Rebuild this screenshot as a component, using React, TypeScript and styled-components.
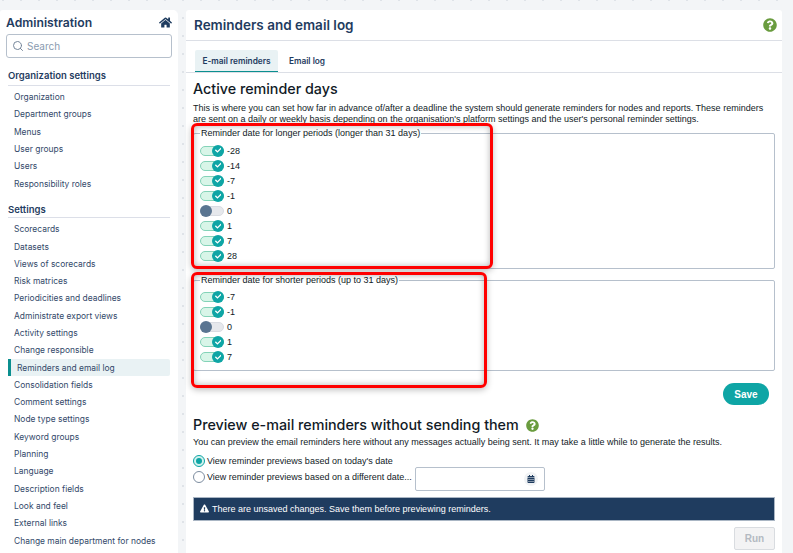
import React from "react";
import styled, { createGlobalStyle } from "styled-components";
import { FaCalendarAlt, FaCheck, FaExclamationTriangle, FaHome, FaQuestionCircle } from "react-icons/fa";
import { Search } from "lucide-react";

const GlobalStyle = createGlobalStyle`
  html, body {
    margin: 0;
    padding: 0;
    height: 553px;
    overflow: hidden;
    background-color: #f3f5f7;
    background-image: radial-gradient(circle at 1px 1px, #dfe3e8 1px, transparent 1.2px);
    background-size: 18px 18px;
    background-position: 2px -1px;
    font-family: "Liberation Sans", Arial, sans-serif;
  }
  * { box-sizing: border-box; }
`;

const Page = styled.div`
  display: flex;
  gap: 8px;
  height: 553px;
  padding: 10px 11px 0 0;
  overflow: hidden;
`;

const Sidebar = styled.aside`
  width: 178px;
  flex-shrink: 0;
  background: #fff;
  border-radius: 3px 5px 0 0;
  padding: 0 8px;
`;

const SideHead = styled.div`
  display: flex;
  align-items: center;
  justify-content: space-between;
  height: 24px;
  margin: 0 -2px;
  color: #1f3c5f;
  svg { font-size: 13px; color: #1f3c5f; }
`;

const SideTitle = styled.h1`
  margin: 0;
  font: 600 12.2px Inter, sans-serif;
  color: #1f3c5f;
`;

const SearchBox = styled.div`
  display: flex;
  align-items: center;
  gap: 3px;
  height: 24px;
  margin: 0 -2px;
  padding: 0 5px;
  border: 1px solid #b6c0cc;
  border-radius: 3px;
  color: #8a9bb0;
  font: 400 10px Inter, sans-serif;
  svg { width: 12px; height: 12px; color: #75869a; }
`;

const GroupTitle = styled.h2<{ $top: number; $height: number }>`
  margin: ${(p) => p.$top}px 0 0;
  height: ${(p) => p.$height}px;
  border-bottom: 1px solid #dcdfe8;
  font: 600 9.5px/13px Inter, sans-serif;
  color: #1f3c5f;
`;

const NavList = styled.ul`
  list-style: none;
  margin: 0;
  padding: 2.4px 0 0;
`;

const NavItem = styled.li<{ $active?: boolean }>`
  display: flex;
  align-items: center;
  height: 17.3px;
  padding-left: 6px;
  font: 400 8.45px Inter, sans-serif;
  white-space: nowrap;
  color: #33496a;
  border-radius: 0 2px 2px 0;
  ${(p) =>
    p.$active &&
    `
    background: #e9f2f4;
    border-left: 3px solid #0b8f8f;
  `}
`;

const Main = styled.main`
  position: relative;
  flex: 1;
  background: #fff;
  border-radius: 3px 3px 0 0;
`;

const TopBar = styled.header`
  display: flex;
  align-items: center;
  justify-content: space-between;
  height: 31px;
  padding: 0 5px 0 8px;
  border-bottom: 1px solid #dcdfe6;
`;

const PageTitle = styled.h1`
  margin: 0;
  font: 600 13.5px Inter, sans-serif;
  color: #1f3c5f;
`;

const Help = styled(FaQuestionCircle)<{ $size: number }>`
  font-size: ${(p) => p.$size}px;
  color: #6a9c3f;
`;

const TabStrip = styled.nav`
  display: flex;
  align-items: flex-end;
  height: 32px;
  padding-left: 9px;
  border-bottom: 1px solid #dcdfe6;
`;

const Tab = styled.div<{ $active?: boolean }>`
  display: flex;
  align-items: center;
  justify-content: center;
  height: 22px;
  width: ${(p) => (p.$active ? "83px" : "58px")};
  font: 600 8.3px Inter, sans-serif;
  color: #1f3c5f;
  border-radius: 2px 2px 0 0;
  background: ${(p) => (p.$active ? "#e9f2f4" : "transparent")};
  border-bottom: 1px solid ${(p) => (p.$active ? "#0b8f8f" : "transparent")};
`;

const Content = styled.div`
  padding: 7px 7px 0;
`;

const Heading = styled.h2`
  margin: 0;
  font: 500 14.3px/18px Inter, sans-serif;
  color: #111a26;
`;

const Paragraph = styled.p<{ $top: number }>`
  margin: ${(p) => p.$top}px 0 0;
  font-size: 9px;
  line-height: 10.5px;
  color: #111a26;
`;

const Fieldset = styled.fieldset<{ $height: number; $top: number; $pad: number }>`
  margin: ${(p) => p.$top}px 0 0;
  padding: ${(p) => p.$pad}px 6px 0;
  height: ${(p) => p.$height}px;
  border: 1px solid #b6c0cc;
  border-radius: 2px;
  min-width: 0;
`;

const Legend = styled.legend`
  padding: 0 1px;
  font-size: 9px;
  line-height: 11px;
  color: #111a26;
`;

const ToggleRow = styled.div`
  display: flex;
  align-items: center;
  gap: 3px;
  height: 15.1px;
  font-size: 9px;
  color: #111a26;
`;

const Track = styled.span<{ $on: boolean }>`
  position: relative;
  display: inline-block;
  width: 24px;
  height: 10px;
  border-radius: 5px;
  background: ${(p) => (p.$on ? "#d8f5e8" : "#e6e8ec")};
  border: 1px solid ${(p) => (p.$on ? "#84d3b8" : "#d9dce2")};
`;

const Knob = styled.span<{ $on: boolean }>`
  position: absolute;
  top: -2px;
  ${(p) => (p.$on ? "right: -1px;" : "left: -1px;")}
  display: flex;
  align-items: center;
  justify-content: center;
  width: 12px;
  height: 12px;
  border-radius: 50%;
  background: ${(p) => (p.$on ? "#0ea5a5" : "#5a7591")};
  color: #fff;
  svg { font-size: 6.5px; }
`;

const Annotation = styled.div<{ $left: number; $top: number; $width: number; $height: number }>`
  position: absolute;
  left: ${(p) => p.$left}px;
  top: ${(p) => p.$top}px;
  width: ${(p) => p.$width}px;
  height: ${(p) => p.$height}px;
  border: 3px solid #f00;
  border-radius: 6px;
  pointer-events: none;
  box-shadow: 0 2px 6px rgba(0, 0, 0, 0.25), inset 0 0 6px rgba(0, 0, 0, 0.3);
`;

const SaveRow = styled.div`
  display: flex;
  justify-content: flex-end;
  padding: 12px 6px 0 0;
`;

const SaveButton = styled.button`
  width: 46px;
  height: 22px;
  border: 0;
  border-radius: 11px;
  background: #0ea5a5;
  color: #fff;
  font: 700 10px "Liberation Sans", sans-serif;
`;

const HeadingRow = styled.div`
  display: flex;
  align-items: center;
  gap: 7px;
  margin-top: 11px;
`;

const RadioRow = styled.label<{ $top: number }>`
  display: flex;
  align-items: center;
  gap: 2px;
  height: ${(p) => (p.$top ? "12px" : "20px")};
  margin-top: ${(p) => p.$top}px;
  font-size: 9px;
  color: #111a26;
`;

const Radio = styled.span<{ $on?: boolean }>`
  display: flex;
  align-items: center;
  justify-content: center;
  width: 12px;
  height: 12px;
  border-radius: 50%;
  border: 1px solid ${(p) => (p.$on ? "#0ea5a5" : "#7d8da0")};
  background: ${(p) => (p.$on ? "#d3f2ee" : "#fff")};
  &::after {
    content: "";
    width: 6px;
    height: 6px;
    border-radius: 50%;
    background: ${(p) => (p.$on ? "#0ea5a5" : "transparent")};
  }
`;

const DateInput = styled.div`
  display: flex;
  align-items: center;
  justify-content: flex-end;
  width: 130px;
  height: 24px;
  margin: 0 0 -4px 1px;
  padding-right: 6px;
  border: 1px solid #b6c0cc;
  border-radius: 2px;
`;

const CalendarDot = styled.span`
  display: flex;
  align-items: center;
  justify-content: center;
  width: 14px;
  height: 14px;
  border-radius: 50%;
  background: #f1f3f5;
  color: #1f3c5f;
  svg { font-size: 8px; }
`;

const Alert = styled.div`
  display: flex;
  align-items: center;
  gap: 3px;
  height: 24px;
  margin-top: 10px;
  padding-left: 6px;
  background: #1f3c5f;
  border: 1px solid #aab6c4;
  color: #fff;
  font-size: 9px;
  svg { font-size: 9px; }
`;

const RunRow = styled.div`
  display: flex;
  justify-content: flex-end;
  padding-top: 6px;
`;

const RunButton = styled.button`
  width: 41px;
  height: 23px;
  border: 1px solid #d9dce0;
  border-radius: 2px;
  background: #f3f3f4;
  color: #b4bac2;
  font: 700 10px "Liberation Sans", sans-serif;
`;

const orgItems = ["Organization", "Department groups", "Menus", "User groups", "Users", "Responsibility roles"];
const settingItems = [
  "Scorecards",
  "Datasets",
  "Views of scorecards",
  "Risk matrices",
  "Periodicities and deadlines",
  "Administrate export views",
  "Activity settings",
  "Change responsible",
  "Reminders and email log",
  "Consolidation fields",
  "Comment settings",
  "Node type settings",
  "Keyword groups",
  "Planning",
  "Language",
  "Description fields",
  "Look and feel",
  "External links",
  "Change main department for nodes",
];

const longDays = [-28, -14, -7, -1, 0, 1, 7, 28];
const shortDays = [-7, -1, 0, 1, 7];

function Toggle({ day }: { day: number }) {
  const on = day !== 0;
  return (
    <ToggleRow>
      <Track $on={on}>
        <Knob $on={on}>{on && <FaCheck />}</Knob>
      </Track>
      {day}
    </ToggleRow>
  );
}

export default function App() {
  return (
    <Page>
      <GlobalStyle />
      <Sidebar>
        <SideHead>
          <SideTitle>Administration</SideTitle>
          <FaHome />
        </SideHead>
        <SearchBox>
          <Search />
          Search
        </SearchBox>
        <GroupTitle $top={11} $height={17}>Organization settings</GroupTitle>
        <NavList>
          {orgItems.map((item) => (
            <NavItem key={item}>{item}</NavItem>
          ))}
        </NavList>
        <GroupTitle $top={11} $height={15}>Settings</GroupTitle>
        <NavList>
          {settingItems.map((item) => (
            <NavItem key={item} $active={item === "Reminders and email log"}>
              {item}
            </NavItem>
          ))}
        </NavList>
      </Sidebar>
      <Main>
        <TopBar>
          <PageTitle>Reminders and email log</PageTitle>
          <Help $size={14} />
        </TopBar>
        <TabStrip>
          <Tab $active>E-mail reminders</Tab>
          <Tab>Email log</Tab>
        </TabStrip>
        <Content>
          <Heading>Active reminder days</Heading>
          <Paragraph $top={5}>
            This is where you can set how far in advance of/after a deadline the system should generate reminders for nodes and reports. These reminders
            are sent on a daily or weekly basis depending on the organisation's platform settings and the user's personal reminder settings.
          </Paragraph>
          <Fieldset $top={4} $height={141} $pad={4}>
            <Legend>Reminder date for longer periods (longer than 31 days)</Legend>
            {longDays.map((day) => (
              <Toggle key={day} day={day} />
            ))}
          </Fieldset>
          <Fieldset $top={6} $height={96} $pad={3}>
            <Legend>Reminder date for shorter periods (up to 31 days)</Legend>
            {shortDays.map((day) => (
              <Toggle key={day} day={day} />
            ))}
          </Fieldset>
          <SaveRow>
            <SaveButton>Save</SaveButton>
          </SaveRow>
          <HeadingRow>
            <Heading>Preview e-mail reminders without sending them</Heading>
            <Help $size={13} />
          </HeadingRow>
          <Paragraph $top={3}>You can preview the email reminders here without any messages actually being sent. It may take a little while to generate the results.</Paragraph>
          <RadioRow $top={7}>
            <Radio $on />
            View reminder previews based on today's date
          </RadioRow>
          <RadioRow $top={0}>
            <Radio />
            View reminder previews based on a different date...
            <DateInput>
              <CalendarDot>
                <FaCalendarAlt />
              </CalendarDot>
            </DateInput>
          </RadioRow>
          <Alert>
            <FaExclamationTriangle />
            There are unsaved changes. Save them before previewing reminders.
          </Alert>
          <RunRow>
            <RunButton>Run</RunButton>
          </RunRow>
        </Content>
        <Annotation $left={5} $top={113} $width={302} $height={146} />
        <Annotation $left={5} $top={262} $width={296} $height={116} />
      </Main>
    </Page>
  );
}
